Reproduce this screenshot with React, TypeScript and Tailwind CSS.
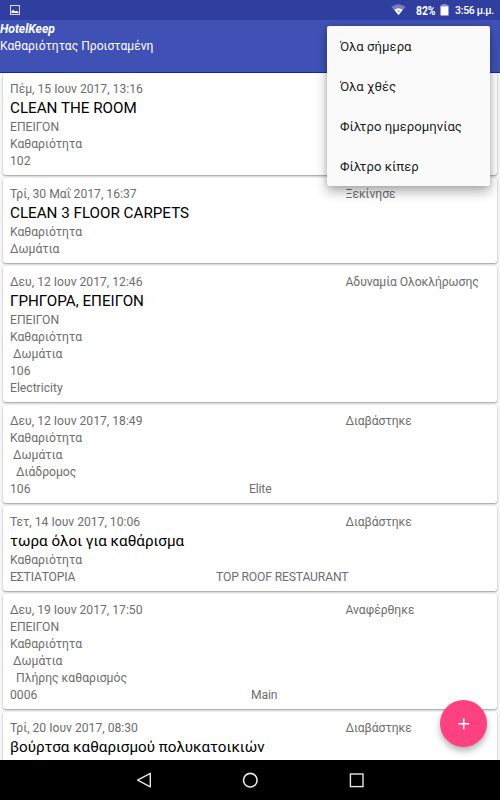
import React from "react";

type Task = {
  date: string;
  status: string;
  title?: string;
  lines: string[];
  place?: string;
  detail?: string;
  // width of the place column, the detail starts right after it
  placeWidth?: string;
};

const tasks: Task[] = [
  {
    date: "Πέμ, 15 Ιουν 2017, 13:16",
    status: "",
    title: "CLEAN THE ROOM",
    lines: ["ΕΠΕΙΓΟΝ", "Καθαριότητα", "102"],
  },
  {
    date: "Τρί, 30 Μαΐ 2017, 16:37",
    status: "Ξεκίνησε",
    title: "CLEAN 3 FLOOR CARPETS",
    lines: ["Καθαριότητα", "Δωμάτια"],
  },
  {
    date: "Δευ, 12 Ιουν 2017, 12:46",
    status: "Αδυναμία Ολοκλήρωσης",
    title: "ΓΡΗΓΟΡΑ, ΕΠΕΙΓΟΝ",
    lines: ["ΕΠΕΙΓΟΝ", "Καθαριότητα", " Δωμάτια", "106", "Electricity"],
  },
  {
    date: "Δευ, 12 Ιουν 2017, 18:49",
    status: "Διαβάστηκε",
    lines: ["Καθαριότητα", " Δωμάτια", "  Διάδρομος"],
    place: "106",
    detail: "Elite",
    placeWidth: "w-[239px]",
  },
  {
    date: "Τετ, 14 Ιουν 2017, 10:06",
    status: "Διαβάστηκε",
    title: "τωρα όλοι για καθάρισμα",
    lines: ["Καθαριότητα"],
    place: "ΕΣΤΙΑΤΟΡΙΑ",
    detail: "TOP ROOF RESTAURANT",
    placeWidth: "w-[206px] tracking-[-0.15px]",
  },
  {
    date: "Δευ, 19 Ιουν 2017, 17:50",
    status: "Αναφέρθηκε",
    lines: ["ΕΠΕΙΓΟΝ", "Καθαριότητα", " Δωμάτια", "  Πλήρης καθαρισμός"],
    place: "0006",
    detail: "Main",
    placeWidth: "w-[241px]",
  },
  {
    date: "Τρί, 20 Ιουν 2017, 08:30",
    status: "Διαβάστηκε",
    title: "βούρτσα καθαρισμού πολυκατοικιών",
    lines: [],
  },
];

const menuItems = ["Όλα σήμερα", "Όλα χθές", "Φίλτρο ημερομηνίας", "Φίλτρο κίπερ"];

function StatusBar() {
  return (
    <div className="flex h-5 shrink-0 items-center bg-[#303f9f] pr-[7px] pl-[10px] text-white">
      <svg width="10" height="10" viewBox="0 0 10 10">
        <rect x="0.5" y="0.5" width="9" height="9" fill="none" stroke="#d9dcef" />
        <path d="M1.5 8V6.2L3.2 4.8L5 6.4L6.5 5.8L8.5 7V8Z" fill="#fff" />
      </svg>
      <svg className="ml-auto" width="15" height="12" viewBox="0 0 15 12">
        <path d="M0.5 3Q7.5 -2.4 14.5 3L7.5 11.5Z" fill="#7580c0" />
        <path d="M3.3 5.8Q7.5 2.6 11.7 5.8L7.5 11Z" fill="#fff" />
        <path d="M6 6.5h3L7.5 8.5Z" fill="#8c95cb" />
      </svg>
      <span className="ml-[10px] w-[21px] origin-left scale-x-[0.86] pt-px text-[12px] font-bold whitespace-nowrap">82%</span>
      <svg className="ml-[3px]" width="9" height="12" viewBox="0 0 9 12">
        <path d="M2.5 0h4v1h2v2h-8v-2h2Z" fill="#8c95cb" />
        <path d="M0.5 2.5h8v9h-8Z" fill="#fff" />
      </svg>
      <span className="ml-[6px] w-[38px] pt-px text-[10.5px] font-medium tracking-[-0.3px] whitespace-nowrap">3:56 μ.μ.</span>
    </div>
  );
}

function TaskCard({ task }: { task: Task }) {
  return (
    <div className="shrink-0 rounded-[3px] bg-white px-[7px] pt-2 pb-[5px] shadow-[0_1px_2px_rgba(0,0,0,0.38)]">
      <div className="flex">
        <span className="w-[335.5px]">{task.date}</span>
        <span className="tracking-[-0.05px]">{task.status}</span>
      </div>
      {task.title && (
        <div className="h-[21px] text-[15.2px] leading-[21px] text-black">{task.title}</div>
      )}
      {task.lines.map((line) => (
        <div key={line} className="h-[17px]">
          {line}
        </div>
      ))}
      {task.place && (
        <div className="flex">
          <span className={task.placeWidth}>{task.place}</span>
          <span className="tracking-[-0.15px]">{task.detail}</span>
        </div>
      )}
    </div>
  );
}

export default function App() {
  return (
    <div className="relative flex h-[800px] w-[500px] flex-col overflow-hidden bg-[#f7f7f7] font-[Roboto,'Noto_Sans',sans-serif]">
      <StatusBar />
      <header className="h-[53px] shrink-0 border-b border-[#0a2bb0] bg-[#3f51b5] text-white">
        <h1 className="h-[17px] text-[12.1px] leading-[18px] font-bold italic">HotelKeep</h1>
        <p className="text-[12.1px] leading-[18px]">Καθαριότητας Προισταμένη</p>
      </header>

      <main className="flex min-h-0 flex-1 flex-col gap-[3px] overflow-hidden px-[3px] text-[12.15px] leading-[17px] whitespace-pre text-[#6e6e6e]">
        {tasks.map((task) => (
          <TaskCard key={task.date} task={task} />
        ))}
      </main>

      <nav className="flex h-10 shrink-0 items-center bg-black pl-[136px]">
        <svg width="16" height="16" viewBox="0 0 16 16" fill="none" stroke="#e6e6e6" strokeWidth="1.4">
          <path d="M14.3 1.4V14.8L1.6 8.1Z" strokeLinejoin="round" />
        </svg>
        <svg className="ml-[90px]" width="16" height="16" viewBox="0 0 16 16" fill="none" stroke="#e6e6e6" strokeWidth="1.6">
          <circle cx="8.3" cy="8.2" r="6.8" />
        </svg>
        <svg className="ml-[90px]" width="16" height="16" viewBox="0 0 16 16" fill="none" stroke="#e6e6e6" strokeWidth="1.4">
          <rect x="2.4" y="2" width="12.6" height="12.6" />
        </svg>
      </nav>

      {/* overflow menu */}
      <ul className="absolute top-[26px] left-[327px] h-[160px] w-[163px] rounded-[2px] bg-[#fafafa] text-[13.2px] leading-10 text-black/90 shadow-[0_6px_12px_rgba(0,0,0,0.3),0_0_5px_rgba(0,0,0,0.15)]">
        {menuItems.map((item) => (
          <li key={item} className="h-10 pt-px pl-[13px] whitespace-nowrap">
            {item}
          </li>
        ))}
      </ul>

      {/* add button */}
      <button className="absolute top-[700px] left-[440px] flex size-[47px] items-center justify-center rounded-full bg-[#ff4081] shadow-[0_4px_6px_rgba(0,0,0,0.3)]">
        <svg width="12" height="12" viewBox="0 0 12 12" stroke="#fff" strokeWidth="1.6">
          <path d="M5.7 0.3v11M0.2 5.8h11" />
        </svg>
      </button>
    </div>
  );
}
